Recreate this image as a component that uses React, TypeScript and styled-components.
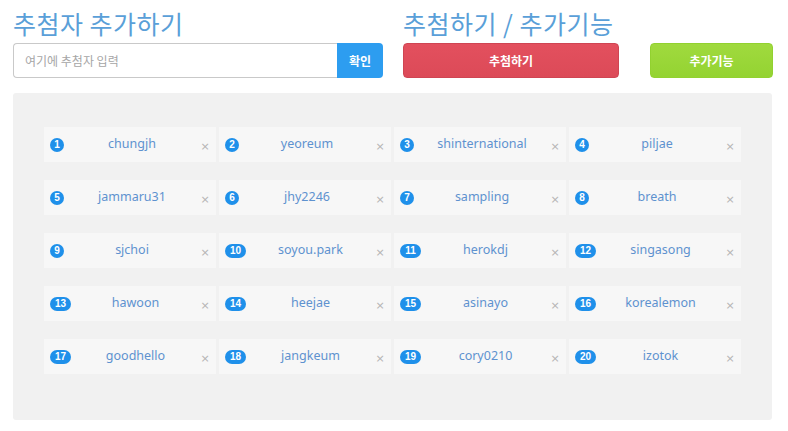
import React from "react";
import styled, { createGlobalStyle } from "styled-components";

const Global = createGlobalStyle`
  html, body { margin: 0; padding: 0; background: #fff; }
  body { font-family: "Noto Sans CJK KR", "Noto Sans", sans-serif; }
  * { box-sizing: border-box; }
`;

const Page = styled.div`
  width: 788px;
  padding: 7px 16px 0 13px;
`;

const Header = styled.div`
  display: grid;
  grid-template-columns: 370px 370px;
  column-gap: 20px;
`;

const Section = styled.div`
  display: flex;
  flex-direction: column;
`;

const Title = styled.h2`
  margin: 0 0 4px;
  font-size: 25px;
  line-height: 32px;
  font-weight: 400;
  color: #5a9fd8;
  letter-spacing: 0.5px;
`;

const InputRow = styled.div`
  display: flex;
  height: 35px;
`;

const Input = styled.input`
  flex: 1;
  min-width: 0;
  height: 35px;
  border: 1px solid #c9c9c9;
  border-right: none;
  border-radius: 4px 0 0 4px;
  padding: 0 11px;
  font-family: "Noto Sans CJK KR", sans-serif;
  font-size: 12px;
  color: #555;
  outline: none;
  &::placeholder { color: #a6a6a6; }
`;

const ConfirmButton = styled.button`
  width: 46px;
  height: 35px;
  border: none;
  border-radius: 0 4px 4px 0;
  background: #2d9df0;
  color: #fff;
  font-family: "Noto Sans CJK KR", sans-serif;
  font-size: 12px;
  font-weight: 700;
  padding: 0;
`;

const ActionRow = styled.div`
  display: flex;
  justify-content: space-between;
  height: 35px;
`;

const ActionButton = styled.button<{ $bg: string; $w: number; $border: string }>`
  width: ${(p) => p.$w}px;
  height: 35px;
  border: 1px solid ${(p) => p.$border};
  border-radius: 4px;
  background: ${(p) => p.$bg};
  color: #fff;
  font-family: "Noto Sans CJK KR", sans-serif;
  font-size: 12px;
  font-weight: 700;
  padding: 0;
`;

const Panel = styled.div`
  margin-top: 15px;
  width: 759px;
  background: #f1f1f1;
  border-radius: 3px;
  padding: 34px 31px 46px;
  display: grid;
  grid-template-columns: repeat(4, 172px);
  column-gap: 3px;
  row-gap: 18px;
`;

const Card = styled.div`
  position: relative;
  height: 35px;
  background: #f7f7f7;
  display: flex;
  align-items: center;
  padding: 0 6px;
`;

const Badge = styled.span<{ $wide: boolean }>`
  flex: none;
  min-width: 14px;
  width: ${(p) => (p.$wide ? "21px" : "14px")};
  height: 14px;
  border-radius: 7px;
  background: #1f90ea;
  color: #fff;
  font-family: "Liberation Sans", Arial, sans-serif;
  font-size: 10px;
  font-weight: 700;
  line-height: 14px;
  text-align: center;
`;

const Name = styled.span`
  flex: 1;
  text-align: center;
  font-family: "Noto Sans", "Open Sans", sans-serif;
  font-size: 12.5px;
  color: #5e92cf;
  padding-bottom: 2px;
`;

const Close = styled.span`
  flex: none;
  width: 10px;
  font-family: "DejaVu Sans", sans-serif;
  font-size: 11px;
  color: #b4b4b4;
  margin-top: 4px;
  text-align: center;
`;

const names = [
  "chungjh", "yeoreum", "shinternational", "piljae",
  "jammaru31", "jhy2246", "sampling", "breath",
  "sjchoi", "soyou.park", "herokdj", "singasong",
  "hawoon", "heejae", "asinayo", "korealemon",
  "goodhello", "jangkeum", "cory0210", "izotok",
];

export default function App() {
  return (
    <Page>
      <Global />
      <Header>
        <Section>
          <Title>추첨자 추가하기</Title>
          <InputRow>
            <Input placeholder="여기에 추첨자 입력" />
            <ConfirmButton>확인</ConfirmButton>
          </InputRow>
        </Section>
        <Section>
          <Title>추첨하기 / 추가기능</Title>
          <ActionRow>
            <ActionButton $w={216} $bg="linear-gradient(#e3505e, #dc4a58)" $border="#cf4553">추첨하기</ActionButton>
            <ActionButton $w={123} $bg="linear-gradient(#a0da3e, #94d332)" $border="#92d130">추가기능</ActionButton>
          </ActionRow>
        </Section>
      </Header>
      <Panel>
        {names.map((n, i) => (
          <Card key={n}>
            <Badge $wide={i + 1 >= 10}>{i + 1}</Badge>
            <Name>{n}</Name>
            <Close>×</Close>
          </Card>
        ))}
      </Panel>
    </Page>
  );
}
